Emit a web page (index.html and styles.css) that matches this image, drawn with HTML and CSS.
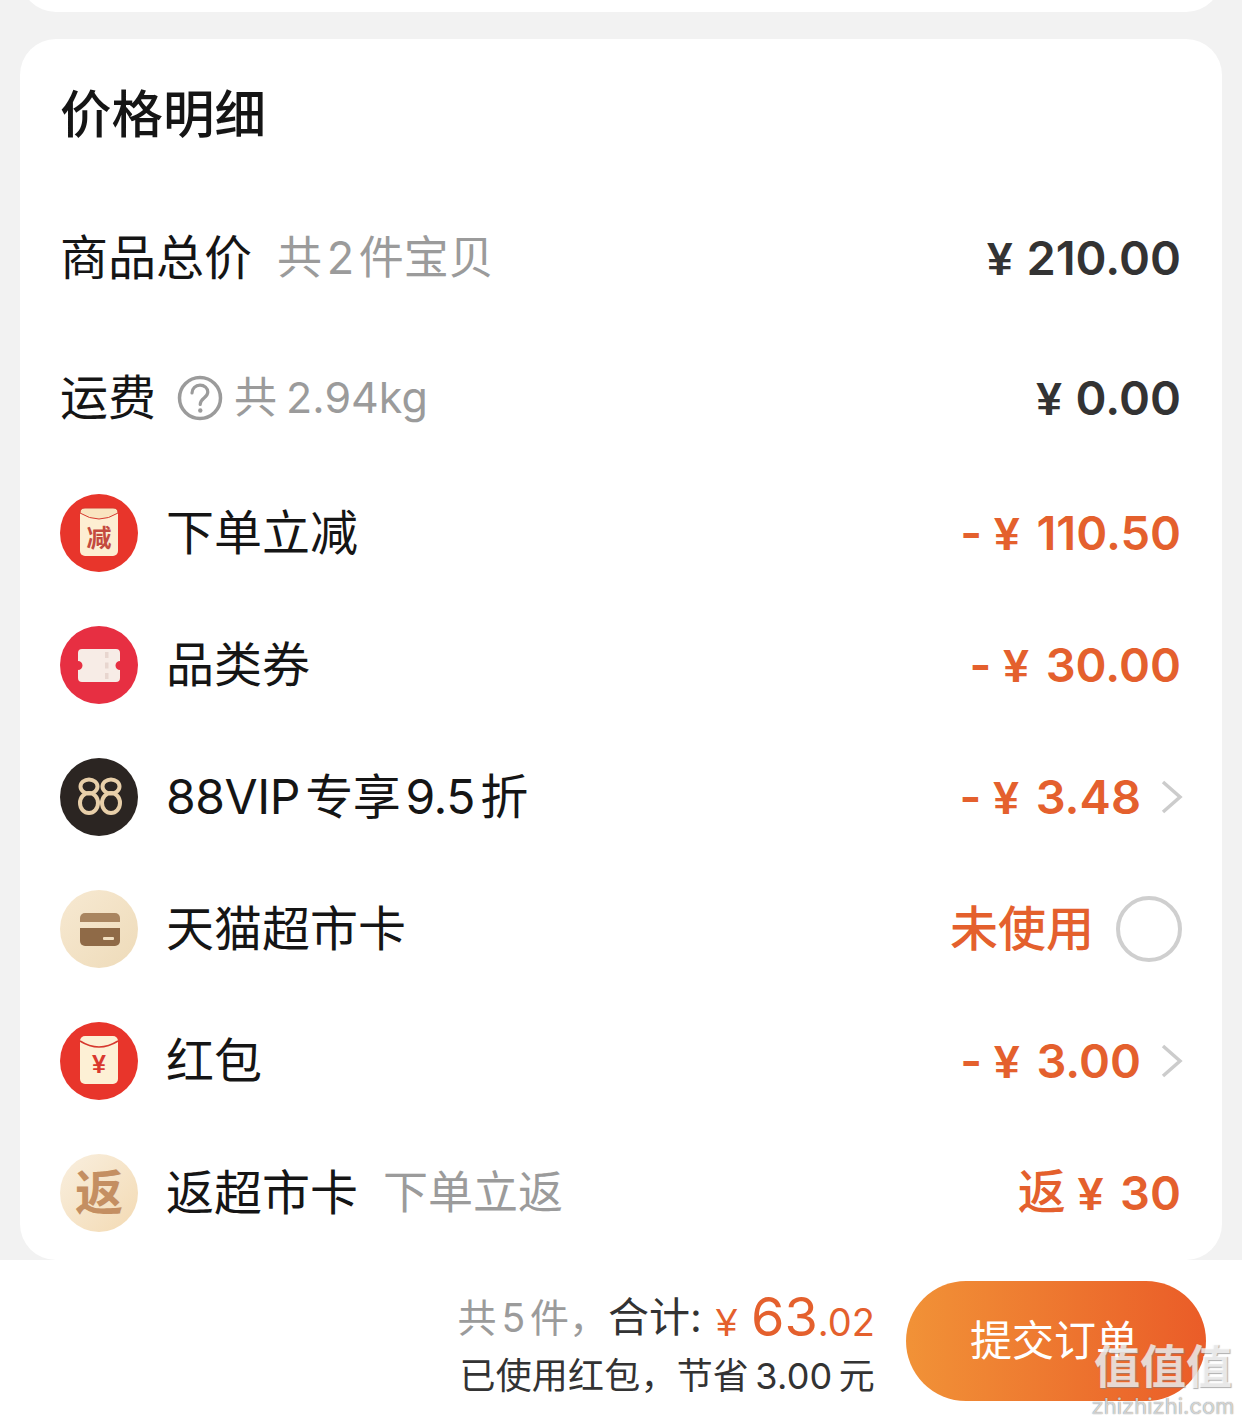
FILE: index.html
```html
<!DOCTYPE html>
<html lang="zh-CN">
<head>
<meta charset="utf-8">
<title>价格明细</title>
<link rel="stylesheet" href="styles.css">
</head>
<body>
<div class="page">
  <div class="prev-card"></div>
  <section class="card">
    <h2 class="title">价格明细</h2>

    <div class="row row-goods">
      <div class="left"><span class="label">商品总价</span><span class="sub">共 2 件宝贝</span></div>
      <div class="right"><span class="amount"><span class="yen">¥</span> 210.00</span></div>
    </div>

    <div class="row row-ship">
      <div class="left ship-left">
        <span class="label">运费</span>
        <svg class="help" viewBox="0 0 46 46"><circle cx="23" cy="23" r="20.5" fill="none" stroke="#9b9b9b" stroke-width="3.500"/><path d="M15 18c0-4.800 3.600-7.800 8-7.800 4.400 0 7.800 2.800 7.800 6.800 0 6-7.600 6.200-7.600 12.500" fill="none" stroke="#9b9b9b" stroke-width="3.200" stroke-linecap="round"/><circle cx="23.300" cy="35.500" r="2.200" fill="#9b9b9b"/></svg>
        <span class="sub sub-ship">共 2.94kg</span>
      </div>
      <div class="right"><span class="amount"><span class="yen">¥</span> 0.00</span></div>
    </div>

    <div class="row row-icon">
      <div class="left">
        <svg class="icon" viewBox="0 0 78 78"><circle cx="39" cy="39" r="39" fill="#e8352b"/><rect x="20" y="14" width="38" height="48" rx="5" fill="#fdeed2"/><path d="M20 19Q39 31 58 19 58 14 53 14H25Q20 14 20 19z" fill="#f9e4c0" stroke="#d6382e" stroke-width="1"/><text x="39" y="53" class="icon-text-red" text-anchor="middle">减</text></svg>
        <span class="label">下单立减</span>
      </div>
      <div class="right"><span class="amount accent">- <span class="yen">¥</span> 110.50</span></div>
    </div>

    <div class="row row-icon">
      <div class="left">
        <svg class="icon" viewBox="0 0 78 78"><circle cx="39" cy="39" r="39" fill="#e72f42"/><path d="M22 23h34a4 4 0 0 1 4 4v8a4.500 4.500 0 0 0 0 9v8a4 4 0 0 1-4 4H22a4 4 0 0 1-4-4v-8a4.500 4.500 0 0 0 0-9v-8a4 4 0 0 1 4-4z" fill="#f7ece6"/><rect x="45" y="26" width="3.500" height="6" fill="#e8d6cf"/><rect x="45" y="36.500" width="3.500" height="6" fill="#e8d6cf"/><rect x="45" y="47" width="3.500" height="6" fill="#e8d6cf"/></svg>
        <span class="label">品类券</span>
      </div>
      <div class="right"><span class="amount accent">- <span class="yen">¥</span> 30.00</span></div>
    </div>

    <div class="row row-icon">
      <div class="left">
        <svg class="icon" viewBox="0 0 78 78"><circle cx="39" cy="39" r="39" fill="#2b2522"/><g fill="none" stroke="#e8cfa9" stroke-width="4"><ellipse cx="29" cy="28.500" rx="8.500" ry="7"/><ellipse cx="29" cy="45" rx="9" ry="10"/><ellipse cx="51" cy="28.500" rx="8.500" ry="7"/><ellipse cx="51" cy="45" rx="9" ry="10"/></g></svg>
        <span class="label label-vip">88VIP 专享 9.5 折</span>
      </div>
      <div class="right">
        <span class="amount accent">- <span class="yen">¥</span> 3.48</span>
        <svg class="chevron" viewBox="0 0 24 36"><path d="M4 3l17 15L4 33" fill="none" stroke="#cccccc" stroke-width="3.500"/></svg>
      </div>
    </div>

    <div class="row row-icon">
      <div class="left">
        <svg class="icon" viewBox="0 0 78 78"><defs><linearGradient id="cream" x1="0" y1="0" x2="1" y2="1"><stop offset="0" stop-color="#f7e9d2"/><stop offset="1" stop-color="#eedbb9"/></linearGradient></defs><circle cx="39" cy="39" r="39" fill="url(#cream)"/><path d="M20 28a5 5 0 0 1 5-5h30a5 5 0 0 1 5 5v4H20z" fill="#a98560"/><path d="M20 38h40v13a5 5 0 0 1-5 5H25a5 5 0 0 1-5-5z" fill="#8f6a47"/><rect x="43" y="47" width="11" height="3" rx="1" fill="#f1dfc1"/></svg>
        <span class="label">天猫超市卡</span>
      </div>
      <div class="right">
        <span class="accent unused">未使用</span>
        <svg class="radio" viewBox="0 0 66 66"><circle cx="33" cy="33" r="31" fill="none" stroke="#cfcfcf" stroke-width="4"/></svg>
      </div>
    </div>

    <div class="row row-icon">
      <div class="left">
        <svg class="icon" viewBox="0 0 78 78"><circle cx="39" cy="39" r="39" fill="#e8352b"/><rect x="20" y="14" width="38" height="48" rx="5" fill="#fdf0d5"/><path d="M20 19Q39 31 58 19" fill="none" stroke="#d6382e" stroke-width="1.500"/><text x="39" y="51" class="icon-text-yen" text-anchor="middle">¥</text></svg>
        <span class="label">红包</span>
      </div>
      <div class="right">
        <span class="amount accent">- <span class="yen">¥</span> 3.00</span>
        <svg class="chevron" viewBox="0 0 24 36"><path d="M4 3l17 15L4 33" fill="none" stroke="#cccccc" stroke-width="3.500"/></svg>
      </div>
    </div>

    <div class="row row-icon">
      <div class="left">
        <svg class="icon" viewBox="0 0 78 78"><defs><linearGradient id="cream2" x1="0" y1="0" x2="1" y2="1"><stop offset="0" stop-color="#f9efdf"/><stop offset="1" stop-color="#f3dab3"/></linearGradient></defs><circle cx="39" cy="39" r="39" fill="url(#cream2)"/><text x="39" y="56" class="icon-text-fan" text-anchor="middle">返</text></svg>
        <span class="label">返超市卡</span><span class="sub">下单立返</span>
      </div>
      <div class="right"><span class="amount accent"><span class="fan">返</span> <span class="yen">¥</span> 30</span></div>
    </div>
  </section>

  <footer class="footer">
    <div class="summary">
      <div class="total-line"><span class="muted">共 5 件，</span><span class="sum-label">合计:</span><span class="total-yen">¥</span><span class="total-int">63</span><span class="total-dec">.02</span></div>
      <div class="saved">已使用红包，节省 3.00 元</div>
    </div>
    <button class="submit">提交订单</button>
  </footer>

  <div class="watermark"><span class="wm-cn">值值值</span><span class="wm-en">zhizhizhi.com</span></div>
</div>
</body>
</html>
```

FILE: styles.css
```css
* { box-sizing: border-box; }
html, body { margin: 0; padding: 0; }
body {
  background: #f2f2f2;
  font-family: Inter, "Noto Sans CJK SC", "Noto Sans", sans-serif;
  color: #111;
}
.page { position: relative; width: 1242px; height: 1422px; overflow: hidden; }
.prev-card {
  height: 80px;
  margin: -68px 20px 27px;
  background: #fff;
  border-radius: 0 0 36px 36px;
}
.card {
  margin: 0 20px;
  height: 1221px;
  padding: 0 41px 0 40px;
  background: #fff;
  border-radius: 36px;
}
.title {
  margin: 0;
  height: 148px;
  padding-bottom: 5px;
  display: flex;
  align-items: center;
  font-size: 51.5px;
  font-weight: 500;
  color: #151515;
}
.row { display: flex; align-items: center; justify-content: space-between; }
.row-goods { height: 142px; }
.row-ship { height: 138px; }
.row-icon { height: 132px; }
.left, .right { display: flex; align-items: center; }
.label { font-size: 48px; color: #151515; word-spacing: -8px; padding-bottom: 8px; }
.label-vip { letter-spacing: -0.4px; }
.sub { font-size: 45px; color: #9b9b9b; margin-left: 25px; word-spacing: -8px; padding-bottom: 8px; }
.sub-ship { font-size: 43px; margin-left: 11px; word-spacing: -3px; }
.help { width: 46px; height: 46px; margin-left: 21px; }
.icon { width: 78px; height: 78px; margin: 0 28px 0 0; flex: none; }
.icon-text-red { font-size: 25px; font-weight: 700; fill: #c44a3e; }
.icon-text-yen { font-family: "Liberation Sans", sans-serif; font-size: 25px; font-weight: 700; fill: #d9382e; }
.icon-text-fan { font-size: 48px; font-weight: 700; fill: #c48f62; }
.amount { font-size: 47px; font-weight: 600; color: #333; white-space: pre; line-height: 56px; }
.amount.accent { color: #e4602d; }
.yen { font-family: "Liberation Sans", sans-serif; font-size: 46px; font-weight: 700; margin-right: 2px; }
.accent .yen { margin-right: 5px; }
.fan { font-size: 48px; font-weight: 500; line-height: 1; vertical-align: 1px; }
.accent { color: #e4602d; }
.unused { font-size: 48px; font-weight: 500; padding-bottom: 8px; }
.chevron { width: 24px; height: 36px; margin: 0 -2px 0 18px; }
.radio { width: 66px; height: 66px; margin: 0 -1px 0 22px; }
.footer {
  height: 162px;
  background: #fff;
  padding: 21px 36px 0 0;
  display: flex;
  justify-content: flex-end;
  align-items: flex-start;
  gap: 31px;
}
.summary { display: flex; flex-direction: column; align-items: flex-end; }
.total-line { height: 72px; line-height: 72px; white-space: pre; }
.muted { font-size: 39px; color: #9b9b9b; word-spacing: -6px; vertical-align: 4px; }
.sum-label { font-size: 41px; color: #333; vertical-align: 4px; }
.total-yen { font-family: "Liberation Sans", sans-serif; font-size: 38px; color: #e4602d; margin: 0 14px 0 14px; }
.total-int { font-size: 54px; color: #e4602d; }
.total-dec { font-size: 38px; color: #e4602d; }
.saved { font-size: 36px; line-height: 40px; margin-top: 3px; color: #333; word-spacing: -4px; letter-spacing: 0.2px; }
.submit {
  width: 300px;
  height: 120px;
  border: 0;
  padding: 0 4px 8px 0;
  border-radius: 60px;
  background: linear-gradient(90deg, #f19237, #ea5c28);
  color: #fff;
  font-family: inherit;
  font-size: 42px;
}
.watermark {
  position: absolute;
  left: 1088px;
  top: 1338px;
  width: 150px;
  display: flex;
  flex-direction: column;
  align-items: center;
  pointer-events: none;
}
.wm-cn {
  font-size: 46px;
  line-height: 56px;
  font-weight: 700;
  color: rgba(255, 255, 255, 0.72);
  text-shadow: 1px 1px 1px rgba(130, 130, 130, 0.65);
  white-space: nowrap;
}
.wm-en {
  font-size: 22px;
  line-height: 24px;
  color: rgba(255, 255, 255, 0.7);
  text-shadow: 0 0 1px rgba(80, 80, 80, 0.9);
}
```
